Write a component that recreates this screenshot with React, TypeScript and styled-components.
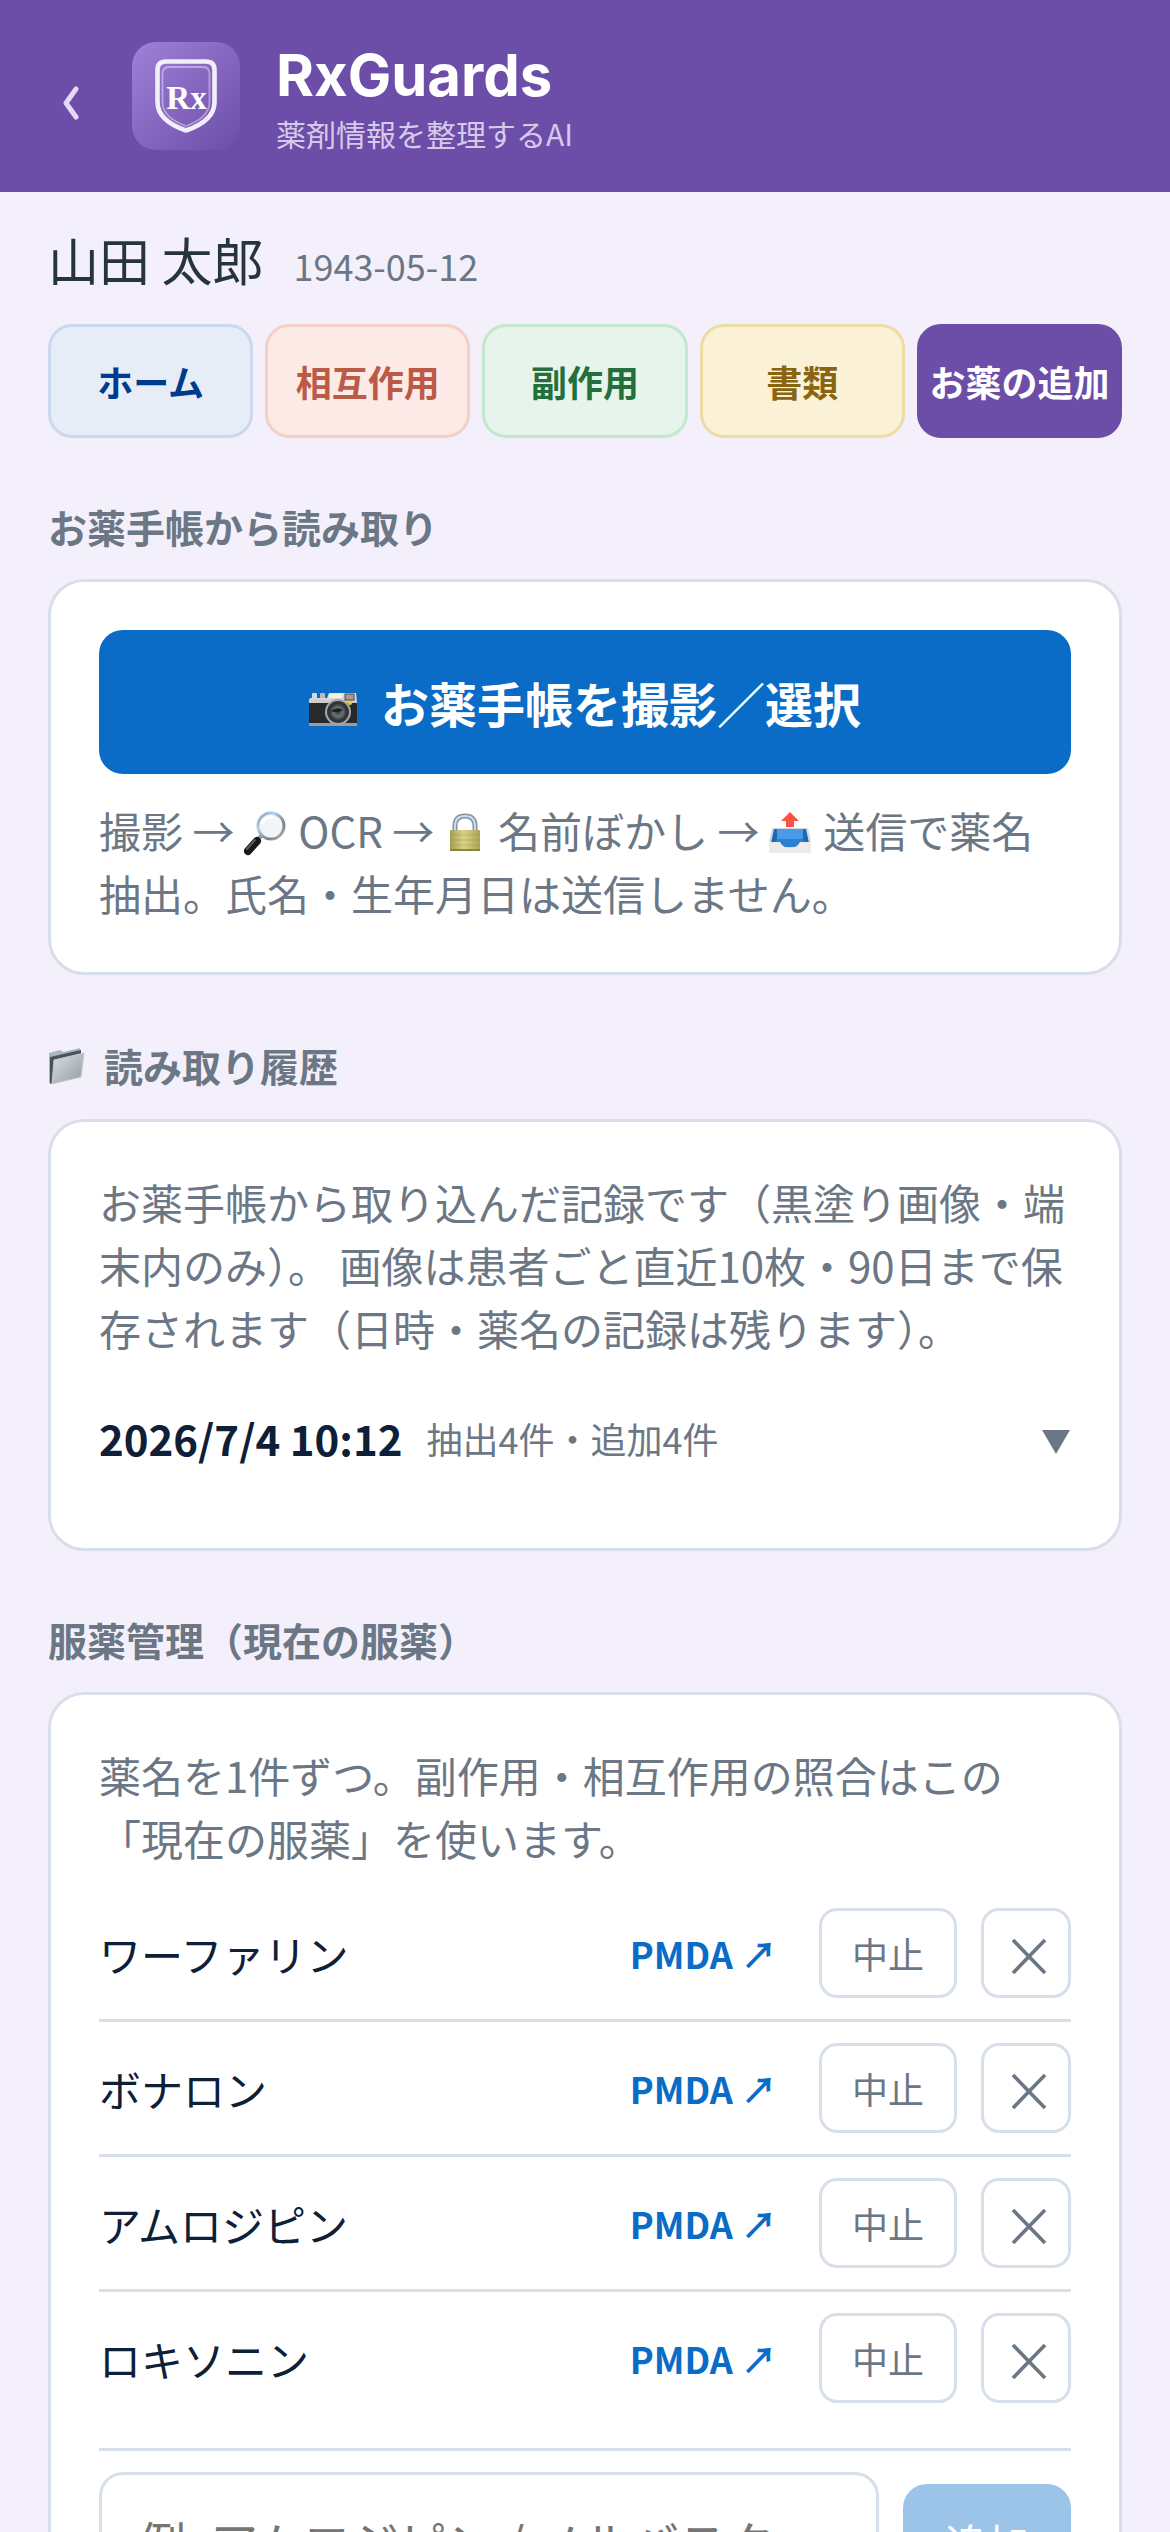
import React, { useState } from "react";
import styled, { createGlobalStyle, css } from "styled-components";

type TabTone = "home" | "interaction" | "sideEffect" | "document" | "add";

interface TabItem { tone: TabTone; label: string; }

const tabs: TabItem[] = [
    { tone: "home", label: "ホーム" },
    { tone: "interaction", label: "相互作用" },
    { tone: "sideEffect", label: "副作用" },
    { tone: "document", label: "書類" },
    { tone: "add", label: "お薬の追加" },
];

const medicines = ["ワーファリン", "ボナロン", "アムロジピン", "ロキソニン"];

/*
|--------------------------------------------------------------------------
| Icons
|--------------------------------------------------------------------------
*/

function BackIcon ()
{
    return (
        <svg width="24" height="36" viewBox="0 0 24 36" fill="none" aria-hidden="true">
            <path d="M16 5 L6 19 L16 33" stroke="#e4daf5" strokeWidth="5" strokeLinecap="round" strokeLinejoin="round"/>
        </svg>
    );
}

function ShieldLogo ()
{
    return (
        <svg width="108" height="108" viewBox="0 0 108 108" fill="none" role="img" aria-label="RxGuards">
            <defs>
                <linearGradient id="logoBg" x1="0" y1="0" x2="1" y2="1">
                    <stop offset="0" stopColor="#a080d8"/>
                    <stop offset="1" stopColor="#6b4ea8"/>
                </linearGradient>
            </defs>
            <rect width="108" height="108" rx="24" fill="url(#logoBg)"/>
            <path
                d="M34 19.5 H74 Q82.5 19.5 82.5 28 V60 C82.5 74 70 83 54 88.5 C38 83 25.5 74 25.5 60 V28 Q25.5 19.5 34 19.5 Z"
                stroke="#f3eefb"
                strokeWidth="4.6"
                strokeLinejoin="round"
            />
            <path
                d="M37 25 H71 Q77.5 25 77.5 32 V60 C77.5 71 68 79 54 84 C40 79 30.5 71 30.5 60 V32 Q30.5 25 37 25 Z"
                stroke="#fff"
                strokeOpacity="0.4"
                strokeWidth="1.8"
            />
            <text
                x="54.5"
                y="67"
                textAnchor="middle"
                fontFamily="'Liberation Serif', serif"
                fontWeight="700"
                fontSize="33"
                fill="#fff"
            >
                Rx
            </text>
        </svg>
    );
}

function CameraIcon ()
{
    return (
        <svg width="48" height="48" viewBox="0 -6 48 48" aria-hidden="true">
            <defs>
                <linearGradient id="camTop" x1="0" y1="0" x2="0" y2="1">
                    <stop offset="0" stopColor="#e3e3e3"/>
                    <stop offset="1" stopColor="#8f9091"/>
                </linearGradient>
                <radialGradient id="camLens">
                    <stop offset="0" stopColor="#33383c"/>
                    <stop offset="0.5" stopColor="#6d7478"/>
                    <stop offset="1" stopColor="#2a2c2e"/>
                </radialGradient>
            </defs>
            <rect x="3" y="9" width="5" height="6" rx="1" fill="#d9d9d9"/>
            <rect x="11" y="9" width="5" height="6" rx="1" fill="#bcbcbc"/>
            <path d="M1 14 H18 L20 9 H47 L48 18 V40 Q48 42 46 42 H2 Q0 42 0 40 V16 Z" fill="url(#camTop)"/>
            <rect x="0" y="19" width="48" height="20" fill="#29292b"/>
            <rect x="0" y="39" width="48" height="3" fill="#9c9c9c"/>
            <rect x="20" y="10" width="13" height="4" fill="#f5f0de"/>
            <rect x="36" y="10" width="9" height="6" fill="#ad9b93" stroke="#53473f"/>
            <circle cx="29" cy="28" r="13" fill="#a5a7a9"/>
            <circle cx="29" cy="28" r="11" fill="#34373a"/>
            <circle cx="29" cy="28" r="9" fill="url(#camLens)"/>
            <path d="M22 27 Q28 22 34 26 Q29 30 22 27Z" fill="#1c2023"/>
            <circle cx="41" cy="19" r="2" fill="#f3cb25"/>
        </svg>
    );
}

function SearchEmoji ()
{
    return (
        <svg width="45" height="48" viewBox="0 0 45 48" aria-hidden="true">
            <defs>
                <linearGradient id="glassRim" x1="0" y1="0" x2="1" y2="1">
                    <stop offset="0" stopColor="#8f9599"/>
                    <stop offset="0.3" stopColor="#b4d2f0"/>
                    <stop offset="0.7" stopColor="#7b7e81"/>
                    <stop offset="1" stopColor="#c2c3c4"/>
                </linearGradient>
            </defs>
            <path d="M12 33 L18 26" stroke="#8e9295" strokeWidth="4"/>
            <path d="M4 42 L13 32" stroke="#17191b" strokeWidth="8" strokeLinecap="round"/>
            <path d="M3 40 L11 31" stroke="#555a5e" strokeWidth="2" strokeLinecap="round"/>
            <circle cx="27" cy="17" r="13" fill="#f3f4f5" stroke="url(#glassRim)" strokeWidth="3"/>
            <path d="M18 14 Q21 8 28 8" stroke="#fff" strokeWidth="3" fill="none" strokeLinecap="round"/>
        </svg>
    );
}

function LockEmoji ()
{
    return (
        <svg width="45" height="48" viewBox="0 0 45 48" aria-hidden="true">
            <defs>
                <linearGradient id="lockBody" x1="0" y1="0" x2="1" y2="0">
                    <stop offset="0" stopColor="#a59d50"/>
                    <stop offset="0.45" stopColor="#d9d385"/>
                    <stop offset="1" stopColor="#aca455"/>
                </linearGradient>
            </defs>
            <path d="M11 23 V17 Q11 7 21 7 Q31 7 31 17 V23" fill="none" stroke="#8295a6" strokeWidth="5"/>
            <path d="M11 23 V17 Q11 7 21 7 Q31 7 31 17 V23" fill="none" stroke="#c9dcec" strokeWidth="2"/>
            <rect x="6" y="21" width="30" height="21" rx="1" fill="url(#lockBody)"/>
            <path d="M6 26 H36 M6 31 H36 M6 36 H36" stroke="#9a9245" strokeOpacity="0.4"/>
            <rect x="6" y="40" width="30" height="2" fill="#8c8443"/>
        </svg>
    );
}

function OutboxEmoji ()
{
    return (
        <svg width="45" height="48" viewBox="0 0 45 48" aria-hidden="true">
            <path d="M3 19 H39 L42 32 V43 H0 V32 Z" fill="#d7dadd"/>
            <path d="M5 20 H37 L40 34 H2 Z" fill="#1d68b5"/>
            <path d="M8 20 H34 V30 H8 Z" fill="#479be9"/>
            <path d="M8 30 H34 L40 38 H2 Z" fill="#2c80d3"/>
            <path d="M0 33 H11 Q14 39 21 39 Q28 39 31 33 H42 V43 Q42 44 41 44 H1 Q0 44 0 43 Z" fill="#edece8"/>
            <path d="M21 3 L30 12 H25 V18 H17 V12 H12 Z" fill="#fb5147"/>
        </svg>
    );
}

function FolderEmoji ()
{
    return (
        <svg width="40" height="42" viewBox="0 -2 40 42" aria-hidden="true">
            <defs>
                <linearGradient id="folderFace" x1="0" y1="0" x2="1" y2="1">
                    <stop offset="0" stopColor="#dcdfe2"/>
                    <stop offset="1" stopColor="#929aa2"/>
                </linearGradient>
            </defs>
            <path d="M1 7 L12 4 L15 6 L32 2 L33 8 L3 38 L1 37 Z" fill="#a9b7bc"/>
            <path d="M2 11 L33 4 V9 L6 15 L4 38 L2 37 Z" fill="#45535d"/>
            <path d="M6 14 L36 7 L33 31 L4 38 Z" fill="url(#folderFace)" stroke="#c4c9cd"/>
        </svg>
    );
}

function CloseIcon ()
{
    return (
        <svg width="42" height="42" viewBox="0 0 42 42" aria-hidden="true">
            <path d="M8 8 L40 41 M40 8 L8 41" stroke="currentColor" strokeWidth="3.6"/>
        </svg>
    );
}

/*
|--------------------------------------------------------------------------
| Page
|--------------------------------------------------------------------------
*/

function MedicineRow ({ name }: { name: string })
{
    return (
        <MedicineItem>
            <MedicineName>{name}</MedicineName>
            <PmdaLink href="#pmda">PMDA ↗</PmdaLink>
            <StopButton type="button">中止</StopButton>
            <RemoveButton type="button" aria-label={`${name}を削除`}>
                <CloseIcon/>
            </RemoveButton>
        </MedicineItem>
    );
}

const App = function MedicineAddPage ()
{
    const [draft, setDraft] = useState("");

    return (
        <Page>
            <GlobalStyle/>
            <Header>
                <BackButton type="button" aria-label="戻る"><BackIcon/></BackButton>
                <ShieldLogo/>
                <Brand>
                    <BrandName>RxGuards</BrandName>
                    <BrandTagline>薬剤情報を整理するAI</BrandTagline>
                </Brand>
            </Header>

            <Main>
                <Patient>
                    <PatientName>山田 太郎</PatientName>
                    <PatientBirth>1943-05-12</PatientBirth>
                </Patient>

                <Tabs>
                    {tabs.map(tab => (
                        <Tab key={tab.tone} type="button" $tone={tab.tone}>{tab.label}</Tab>
                    ))}
                </Tabs>

                <SectionTitle>お薬手帳から読み取り</SectionTitle>
                <Card>
                    <CaptureButton type="button">
                        <CameraIcon/>
                        <span>お薬手帳を撮影／選択</span>
                    </CaptureButton>
                    <CaptureNote>
                        撮影 → <SearchEmoji/> OCR → <LockEmoji/> 名前ぼかし → <OutboxEmoji/> 送信で薬名抽出。氏名・生年月日は送信しません。
                    </CaptureNote>
                </Card>

                <SectionTitle $withIcon>
                    <FolderEmoji/>
                    <span>読み取り履歴</span>
                </SectionTitle>
                <Card>
                    <Note>
                        お薬手帳から取り込んだ記録です（黒塗り画像・端末内のみ）。 画像は患者ごと直近10枚・90日まで保存されます（日時・薬名の記録は残ります）。
                    </Note>
                    <HistoryButton type="button">
                        <HistoryDate>2026/7/4 10:12</HistoryDate>
                        <HistoryMeta>抽出4件・追加4件</HistoryMeta>
                        <HistoryMark width="30" height="32" viewBox="0 0 30 32" aria-hidden="true">
                            <path d="M1 8 H29 L15 32 Z" fill="currentColor"/>
                        </HistoryMark>
                    </HistoryButton>
                </Card>

                <SectionTitle>服薬管理（現在の服薬）</SectionTitle>
                <Card>
                    <Note>薬名を1件ずつ。副作用・相互作用の照合はこの「現在の服薬」を使います。</Note>
                    <MedicineList>
                        {medicines.map(name => <MedicineRow key={name} name={name}/>)}
                    </MedicineList>
                    <AddForm onSubmit={event => event.preventDefault()}>
                        <AddInput
                            aria-label="薬名"
                            placeholder="例: アムロジピン / ノルバスク"
                            value={draft}
                            onChange={event => setDraft(event.target.value)}
                        />
                        <AddButton type="submit" disabled={draft === ""}>追加</AddButton>
                    </AddForm>
                </Card>
            </Main>
        </Page>
    );
};

/*
|--------------------------------------------------------------------------
| Styled
|--------------------------------------------------------------------------
*/

const GlobalStyle = createGlobalStyle`
    *, *::before, *::after { box-sizing: border-box; }

    body {
        margin: 0;
        background: #f4f0fb;
        font-family: "Noto Sans CJK JP", sans-serif;
        color: #0d2038;
    }

    button, input { font-family: inherit; }
    button { cursor: pointer; }
`;

const Page = styled.div`
    height: 100vh;
    overflow: hidden auto;
    scrollbar-width: none;
`;

const Header = styled.header`
    display: flex;
    align-items: center;
    height: 192px;
    padding: 0 48px;
    background: #6c4ea8;
    color: #fff;
`;

const BackButton = styled.button`
    display: flex;
    align-items: center;
    width: 84px;
    height: 96px;
    padding: 12px 12px 0;
    border: 0;
    background: none;
`;

const Brand = styled.div`
    display: flex;
    flex-direction: column;
    margin-left: 36px;
    padding-top: 6px;
`;
const BrandName = styled.h1`
    margin: 0;
    font-family: Inter, sans-serif;
    font-size: 58px;
    line-height: 68px;
    font-weight: 700;
`;
const BrandTagline = styled.span`
    font-size: 30px;
    line-height: 48px;
    color: #d6caea;
`;

const Main = styled.main`
    padding: 30px 48px;
`;

const Patient = styled.div`
    display: flex;
    align-items: baseline;
    gap: 30px;
    margin-bottom: 28px;
`;
const PatientName = styled.span`
    font-size: 51px;
    line-height: 74px;
    color: #263440;
`;
const PatientBirth = styled.span`
    font-size: 36px;
    line-height: 48px;
    color: #6b7785;
`;

const Tabs = styled.nav`
    display: flex;
    gap: 12px;
`;

const tabTones = {
    home: css`background: #e6edf7; border-color: #cbd9ef; color: #003a8c;`,
    interaction: css`background: #fceae7; border-color: #f2d1c6; color: #bb5b46;`,
    sideEffect: css`background: #e7f4eb; border-color: #c3e8ce; color: #24703c;`,
    document: css`background: #fbf1d6; border-color: #eddca6; color: #8a6511;`,
    add: css`background: #6c4ea8; border-color: #6c4ea8; color: #fff;`,
};

const Tab = styled.button<{ $tone: TabTone }>`
    flex: 1 1 0;
    height: 114px;
    padding: 0;
    border: 3px solid;
    border-radius: 24px;
    font-size: 36px;
    font-weight: 700;
    white-space: nowrap;
    ${({ $tone }) => tabTones[$tone]}
`;

const SectionTitle = styled.h2<{ $withIcon?: boolean }>`
    display: flex;
    align-items: center;
    gap: 16px;
    margin: 60px 0 24px;
    font-size: 39px;
    line-height: ${({ $withIcon }) => $withIcon ? "60px" : "57px"};
    font-weight: 700;
    color: #6b7785;
`;

const Card = styled.section`
    padding: 48px;
    border: 3px solid #d7dfea;
    border-radius: 36px;
    background: #fff;
`;

const CaptureButton = styled.button`
    display: flex;
    align-items: center;
    justify-content: center;
    gap: 24px;
    width: 100%;
    height: 144px;
    border: 0;
    border-radius: 24px;
    background: #0a6cc6;
    font-size: 48px;
    font-weight: 700;
    color: #fff;
`;

const Note = styled.p`
    margin: 0;
    font-size: 42px;
    line-height: 63px;
    color: #6b7785;
`;
const CaptureNote = styled(Note)`
    margin-top: 24px;

    svg {
        height: 48px;
        margin: -6px 0;
        vertical-align: -3px;
    }
`;

const HistoryButton = styled.button`
    display: flex;
    align-items: center;
    gap: 24px;
    width: 100%;
    height: 117px;
    margin: 20px 0 4px;
    padding: 0;
    border: 0;
    background: none;
    text-align: left;
`;
const HistoryDate = styled.span`
    font-size: 42px;
    font-weight: 700;
    color: #0d2038;
`;
const HistoryMeta = styled.span`
    flex: 1;
    font-size: 36px;
    color: #6b7785;
`;
const HistoryMark = styled.svg`
    color: #6b7785;
`;

const MedicineList = styled.ul`
    margin: 18px 0 24px;
    padding: 0;
    list-style: none;
`;
const MedicineItem = styled.li`
    display: flex;
    align-items: center;
    gap: 24px;
    padding: 21px 0;

    & + & { border-top: 3px solid #d7dfea; }
`;
const MedicineName = styled.span`
    flex: 1;
    font-size: 42px;
`;
const PmdaLink = styled.a`
    padding: 0 18px;
    font-size: 36px;
    font-weight: 700;
    color: #0a6cc6;
    text-decoration: none;
`;

const StopButton = styled.button`
    height: 90px;
    padding: 0 30px;
    border: 3px solid #d7dfea;
    border-radius: 18px;
    background: #fff;
    font-size: 36px;
    color: #6b7785;
`;
const RemoveButton = styled(StopButton)`
    display: flex;
    align-items: center;
    justify-content: center;
    width: 90px;
    padding: 0;
`;

const AddForm = styled.form`
    display: flex;
    align-items: center;
    gap: 24px;
    padding-top: 21px;
    border-top: 3px solid #d7dfea;
`;
const AddInput = styled.input`
    flex: 1;
    min-width: 0;
    height: 144px;
    padding: 0 36px 6px;
    border: 3px solid #d7dfea;
    border-radius: 24px;
    background: #fff;
    font-size: 48px;
    color: #0d2038;

    &::placeholder { color: #757575; }
`;
const AddButton = styled.button`
    width: 168px;
    height: 120px;
    padding: 0 0 6px;
    border: 0;
    border-radius: 24px;
    background: #0a6cc6;
    font-size: 42px;
    color: #fff;

    &:disabled { opacity: 0.4; }
`;

export default App;
